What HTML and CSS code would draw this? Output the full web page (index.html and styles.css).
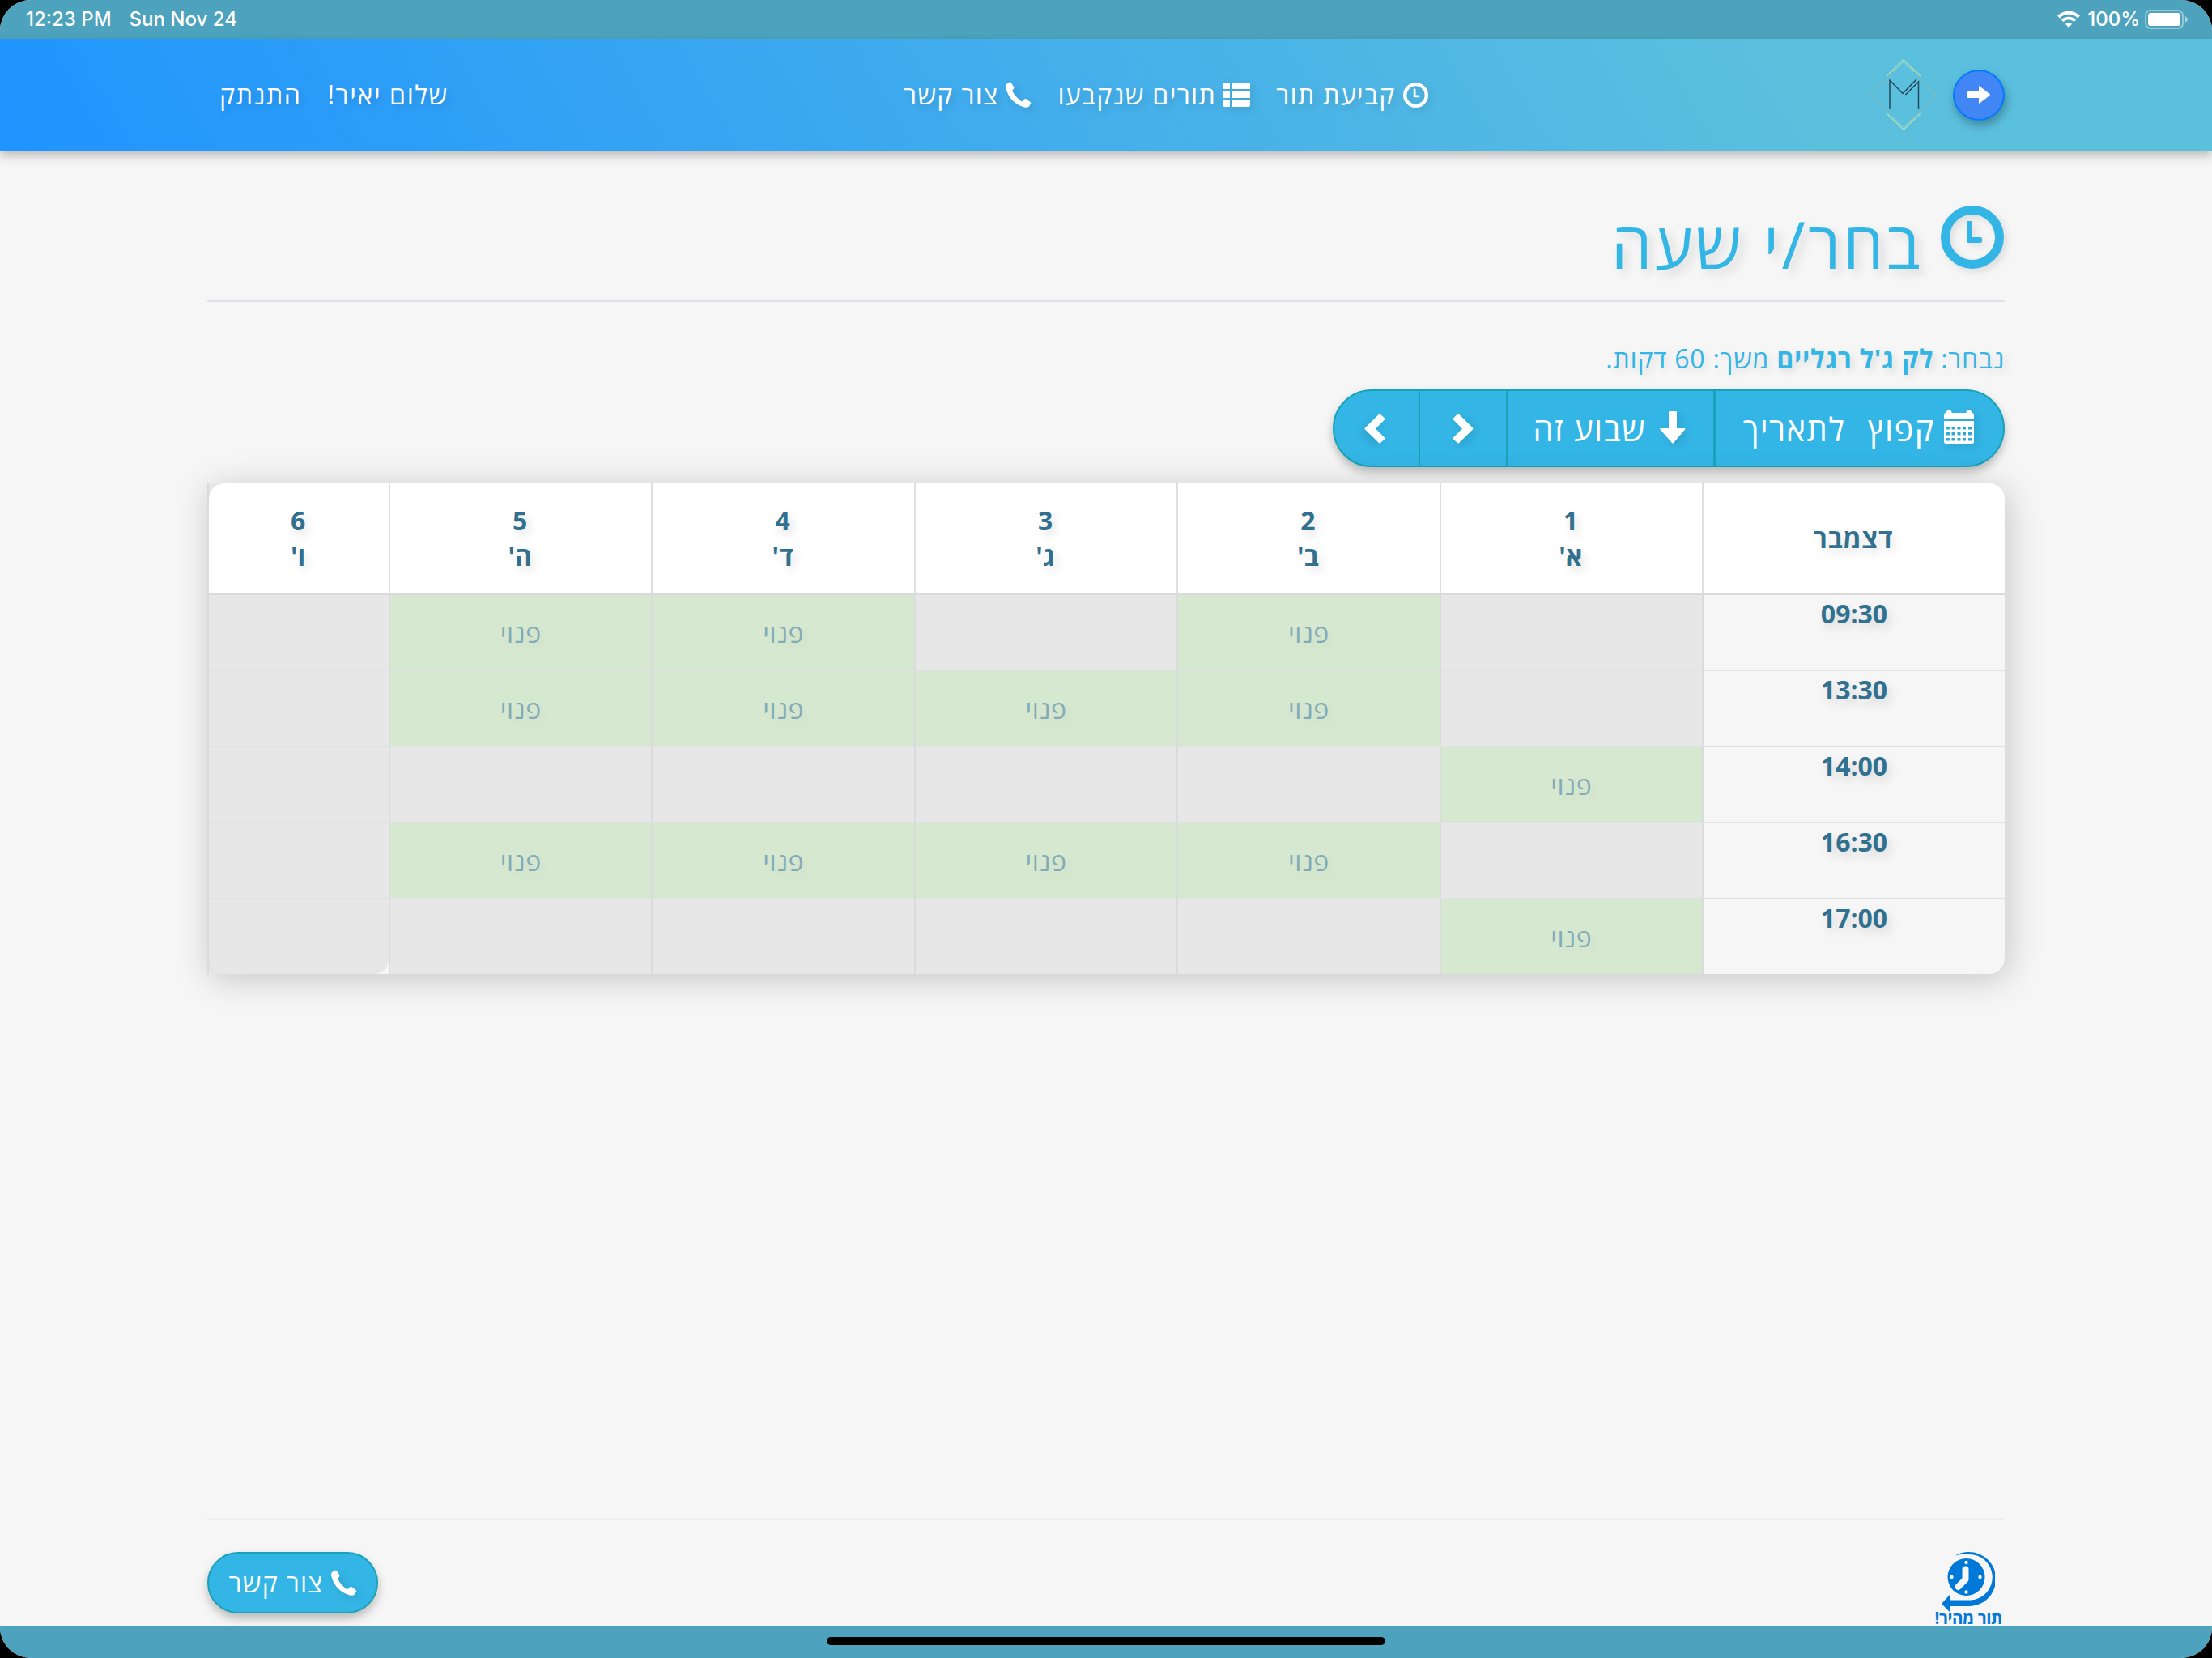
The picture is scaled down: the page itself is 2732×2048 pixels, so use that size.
FILE: index.html
```
<!DOCTYPE html>
<html lang="he" dir="rtl">
<head>
	<meta charset="UTF-8">
	<title>בחר/י שעה</title>
	<link rel="stylesheet" href="styles.css">
</head>
<body>
<svg class="sprite">
	<symbol id="i-clock" viewBox="0 0 78 78">
		<circle cx="39" cy="39" r="33.5" fill="none" stroke="currentColor" stroke-width="11"/>
		<path d="M33 19h4q2 0 2 2v18h10q2 0 2 2v3q0 2-2 2H34q-2 0-2-2V21q0-2 1-2z" fill="currentColor"/>
	</symbol>
	<symbol id="i-list" viewBox="0 0 33 30">
		<path d="M1 0h6q1 0 1 1v7H1q-1 0-1-1V1q0-1 1-1zM11 0h20q2 0 2 2v6H11zM0 11h8v8H0zM11 11h22v8H11zM0 22h8v8H1q-1 0-1-1zM11 22h22v6q0 2-2 2H11z" fill="currentColor"/>
	</symbol>
	<symbol id="i-phone" viewBox="0 0 32 32">
		<path d="M1 3L4.500.8Q6 0 7 1.400L10 6Q11 7.500 9.600 9L8 11Q12 19 20 24.500L23 21.500Q24 20.500 25.500 21.300L30.500 25Q31.800 26 31 27.200L29 30.500Q27 32.300 23 31.500Q5 26 .3 8Q-.4 5 1 3z" fill="currentColor"/>
	</symbol>
	<symbol id="i-calendar" viewBox="0 0 37 41">
		<path fill-rule="evenodd" d="M0 10V5.500Q0 3 2.500 3H3V2q0-2 2-2h2.500q2 0 2 2v1h18V2q0-2 2-2H32q2 0 2 2v1h.5Q37 3 37 5.500V10zM0 13h37v25.500q0 2.500-2.500 2.500h-32Q0 41 0 38.500zM3 20v3.500h4V20zM9.500 20v3.500h4V20zM16.500 20v3.500h4V20zM23 20v3.500h4V20zM30 20v3.500h4V20zM3 27v3.500h4V27zM9.500 27v3.500h4V27zM16.500 27v3.500h4V27zM23 27v3.500h4V27zM30 27v3.500h4V27zM3 34v3.500h4V34zM9.500 34v3.500h4V34zM16.500 34v3.500h4V34zM23 34v3.500h4V34zM30 34v3.500h4V34z" fill="currentColor"/>
	</symbol>
	<symbol id="i-down" viewBox="0 0 32 40">
		<path d="M12 0h8q1 0 1 1v20h9.500q1.500 0 .6 1.500L17 39q-1 1-2 0L.6 22.500Q-.4 21 1 21h10V1q0-1 1-1z" fill="currentColor"/>
	</symbol>
	<symbol id="i-chevron" viewBox="0 0 26 37">
		<path d="M8 .8L25 17.500q1 1 0 2L8 36q-1 1-2 0L1 31.500q-1-1 0-2L12 18.500 1 7.500q-1-1 0-2L6 .8q1-1 2 0z" fill="currentColor"/>
	</symbol>
</svg>

<div class="statusbar" dir="ltr">
	<div class="status-side">
		<span>12:23 PM</span>
		<span>Sun Nov 24</span>
	</div>
	<div class="status-side status-right">
		<svg class="wifi" width="28" height="20" viewBox="0 0 28 20" fill="none" stroke="#fff">
			<path d="M1.500 7a17.500 17.500 0 0 1 25 0" stroke-width="4"/>
			<path d="M6.200 11.800a11 11 0 0 1 15.600 0" stroke-width="3.600"/>
			<path d="M14 20l-4-4.300a5.700 5.700 0 0 1 8 0z" fill="#fff" stroke="none"/>
		</svg>
		<span>100%</span>
		<svg class="battery" width="54" height="24" viewBox="0 0 54 24">
			<rect x="1" y="1" width="46" height="22" rx="6" fill="none" stroke="#fff" stroke-opacity=".4" stroke-width="2"/>
			<rect x="4" y="4" width="40" height="16" rx="3.500" fill="#fff"/>
			<path d="M50 8q3 1.500 3 4t-3 4z" fill="#fff" fill-opacity=".5"/>
		</svg>
	</div>
</div>

<header class="navbar">
	<div class="brand">
		<a class="back">
			<svg width="28" height="22" viewBox="0 0 28 22"><path d="M1 7h13V1q0-1.500 1-.6L27.400 10q.8 1 0 2L15 21.600q-1 .9-1-.6v-6H1q-1 0-1-1V8q0-1 1-1z" fill="#fff"/></svg>
		</a>
		<svg class="logo" width="82" height="88" viewBox="0 0 82 88" fill="none">
			<path d="M41 1L81 44 41 87 1 44z" stroke="#8fb5ad" stroke-width="1"/>
			<path d="M20 21L41 1l21 20M20 67l21 20 21-20" stroke="#a3dfc0" stroke-width="1.500"/>
			<path d="M28 16L41 4l13 12M28 72l13 12 13-12" stroke="#8fd6c9" stroke-width="1"/>
			<path d="M24 62V26l16 16.500L57 25M43.500 44L59.500 28v34" stroke="#24475a" stroke-width="1.500"/>
		</svg>
	</div>
	<nav class="menu">
		<a><svg class="ico-clock"><use href="#i-clock"/></svg>קביעת תור</a>
		<a><svg class="ico-list"><use href="#i-list"/></svg>תורים שנקבעו</a>
		<a><svg class="ico-phone"><use href="#i-phone"/></svg>צור קשר</a>
	</nav>
	<nav class="user">
		<a>שלום יאיר!</a>
		<a>התנתק</a>
	</nav>
</header>

<main class="container">
	<h1><svg class="title-clock"><use href="#i-clock"/></svg>בחר/י שעה</h1>
	<p class="selected">נבחר: <b>לק ג'ל רגליים</b> משך: 60 דקות.</p>

	<div class="toolbar">
		<button class="btn-date"><svg class="ico-cal"><use href="#i-calendar"/></svg>קפוץ &nbsp;לתאריך</button>
		<button class="btn-week"><svg class="ico-down"><use href="#i-down"/></svg>שבוע זה</button>
		<button class="btn-arrow"><svg class="ico-chev"><use href="#i-chevron"/></svg></button>
		<button class="btn-arrow"><svg class="ico-chev flip"><use href="#i-chevron"/></svg></button>
	</div>

	<table class="schedule">
		<colgroup>
			<col class="c-time"><col class="c-day"><col class="c-day"><col class="c-day"><col class="c-day"><col class="c-day"><col class="c-last">
		</colgroup>
		<thead>
			<tr>
				<th class="month">דצמבר</th>
				<th>1<br>א'</th>
				<th>2<br>ב'</th>
				<th>3<br>ג'</th>
				<th>4<br>ד'</th>
				<th>5<br>ה'</th>
				<th>6<br>ו'</th>
			</tr>
		</thead>
		<tbody>
			<tr>
				<td class="time">09:30</td>
				<td></td>
				<td class="free">פנוי</td>
				<td></td>
				<td class="free">פנוי</td>
				<td class="free">פנוי</td>
				<td></td>
			</tr>
			<tr>
				<td class="time">13:30</td>
				<td></td>
				<td class="free">פנוי</td>
				<td class="free">פנוי</td>
				<td class="free">פנוי</td>
				<td class="free">פנוי</td>
				<td></td>
			</tr>
			<tr>
				<td class="time">14:00</td>
				<td class="free">פנוי</td>
				<td></td>
				<td></td>
				<td></td>
				<td></td>
				<td></td>
			</tr>
			<tr>
				<td class="time">16:30</td>
				<td></td>
				<td class="free">פנוי</td>
				<td class="free">פנוי</td>
				<td class="free">פנוי</td>
				<td class="free">פנוי</td>
				<td></td>
			</tr>
			<tr>
				<td class="time">17:00</td>
				<td class="free">פנוי</td>
				<td></td>
				<td></td>
				<td></td>
				<td></td>
				<td></td>
			</tr>
		</tbody>
	</table>
</main>

<footer class="footer">
	<div class="tor">
		<svg width="66" height="74" viewBox="0 0 66 74">
			<path d="M17 4.500A33.500 33.500 0 1 1 35 67H10v7L0 64 10 53v6.500h26A28 28 0 0 0 33 3Q24 2 17 4.500z" fill="#0078d7"/>
			<circle cx="30.500" cy="31" r="23" fill="#0078d7"/>
			<path d="M29.500 21.500v12.500l-9 9" stroke="#f6f6f6" stroke-width="8" stroke-linecap="round" stroke-linejoin="round" fill="none"/>
			<g fill="#f6f6f6"><circle cx="30.500" cy="13" r="2.200"/><circle cx="30.500" cy="49.500" r="2.200"/><circle cx="12.500" cy="31" r="2.200"/><circle cx="47.500" cy="31" r="2.200"/></g>
		</svg>
		<span>תור מהיר!</span>
	</div>
	<a class="contact"><svg class="ico-phone"><use href="#i-phone"/></svg>צור קשר</a>
</footer>

<div class="homebar"><div class="indicator"></div></div>
</body>
</html>
```
FILE: styles.css
```
* {
	box-sizing: border-box;
}
html {
	background: #000;
}
body {
	margin: 0;
	width: 2732px;
	height: 2048px;
	display: flex;
	flex-direction: column;
	overflow: hidden;
	border-radius: 38px;
	background: #f6f6f6;
	font-family: "Open Sans", "Noto Sans", sans-serif;
	font-size: 32px;
	font-weight: 400;
	line-height: 48px;
}
.sprite {
	position: absolute;
	width: 0;
	height: 0;
}

/* status bar */
.statusbar {
	height: 48px;
	flex: none;
	padding: 0 29px 0 32px;
	display: flex;
	justify-content: space-between;
	align-items: center;
	background: #4da3bd;
	color: #fff;
	font: 500 24px/48px Inter, sans-serif;
}
.status-side {
	display: flex;
	gap: 22px;
	align-items: center;
}
.status-right {
	gap: 9px;
}
.battery {
	margin-left: -3px;
}

/* header */
.navbar {
	height: 138px;
	flex: none;
	padding: 0 256px;
	display: flex;
	justify-content: space-between;
	align-items: center;
	background: linear-gradient(60deg, #1f94ff 0%, #5bc0de 80%);
	box-shadow: 0 6px 12px rgba(0,0,0,.25);
	color: #fff;
	letter-spacing: 1.35px;
	text-shadow: 4px 4px 10px rgba(0,0,0,.15);
}
.brand {
	display: flex;
	align-items: center;
	gap: 20px;
}
.back {
	width: 64px;
	height: 63px;
	display: flex;
	align-items: center;
	justify-content: center;
	border: 2px solid #007bff;
	border-radius: 50%;
	background: #4285f4;
	box-shadow: 2px 6px 12px rgba(0,0,0,.3);
}
.menu, .user {
	display: flex;
	gap: 32px;
}
.menu a {
	display: flex;
	align-items: center;
}
.user {
	padding: 0 16px 0 15px;
	letter-spacing: 1.6px;
}
.menu svg, .contact svg, h1 svg, .toolbar svg {
	flex: none;
	filter: drop-shadow(4px 4px 5px rgba(0,0,0,.1));
}
.ico-clock {
	width: 31px;
	height: 31px;
	margin-left: 9px;
}
.ico-list {
	width: 33px;
	height: 30px;
	margin-left: 9px;
}
.ico-phone {
	width: 32px;
	height: 32px;
	margin-left: 9px;
}

/* page */
.container {
	width: 2220px;
	margin: 0 auto;
	flex: 1;
	color: #33b5e5;
}
h1 {
	height: 187px;
	margin: 0;
	padding-top: 53px;
	display: flex;
	border-bottom: 2px solid #dee2e6;
	font-size: 80px;
	font-weight: 400;
	letter-spacing: 3.3px;
	line-height: 124px;
	text-shadow: 6px 6px 12px rgba(0,0,0,.12);
}
.title-clock {
	width: 78px;
	height: 78px;
	margin: 15px 1px 0 22px;
}
.selected {
	margin: 46px 0 14px;
	letter-spacing: .76px;
	text-shadow: 4px 4px 10px rgba(0,0,0,.12);
}
.toolbar {
	width: 830px;
	height: 96px;
	display: flex;
	overflow: hidden;
	border: 2px solid #17a2b8;
	border-radius: 48px;
	background: #33b5e5;
	box-shadow: 0 6px 12px rgba(0,0,0,.25);
}
.toolbar button {
	display: flex;
	align-items: center;
	justify-content: center;
	padding: 0;
	border: 0;
	background: none;
	color: #fff;
	font-family: inherit;
	font-size: 40px;
	letter-spacing: 1.5px;
}
.toolbar .btn-date {
	width: 359px;
	padding-right: 3px;
	border-left: 4px solid #17a2b8;
	word-spacing: 2px;
}
.toolbar .btn-week {
	width: 257px;
	padding-right: 2px;
	border-left: 2px solid #17a2b8;
}
.toolbar .btn-arrow {
	width: 106px;
}
.toolbar .btn-arrow:last-child {
	padding-right: 4px;
	border-right: 2px solid #17a2b8;
}
.ico-cal {
	width: 37px;
	height: 41px;
	margin: 0 0 3px 11px;
}
.ico-down {
	width: 32px;
	height: 40px;
	margin: 0 0 3px 17px;
}
.ico-chev {
	width: 26px;
	height: 37px;
}
.flip {
	transform: scaleX(-1);
}

/* schedule */
.schedule {
	width: 2220px;
	margin-top: 20px;
	table-layout: fixed;
	border-collapse: separate;
	border-spacing: 0;
	border-radius: 0 20px 20px 0;
	background: linear-gradient(to right, #dadbdd 2px, #e6e6e6 2px, #e6e6e6 50px, #f6f6f6 50px);
	box-shadow: 4px 6px 44px rgba(0,0,0,.2);
	color: #31708f;
	text-align: center;
	line-height: 44px;
	text-shadow: 4px 6px 12px rgba(0,0,0,.13);
}
.c-time {
	width: 374px;
}
.c-day {
	width: 324.4px;
}
.c-last {
	width: 224px;
}
.schedule th {
	height: 138px;
	padding: 1px 2px 0 0;
	border-left: 2px solid #dddee0;
	border-bottom: 3px solid #d9dadc;
	background: #fff;
	font-weight: 700;
}
.schedule .month {
	letter-spacing: .7px;
}
.schedule td {
	height: 94px;
	padding: 2px 0 0;
	border-left: 2px solid #dadbdd;
	border-bottom: 2px solid #dee0e4;
	background: #e7e7e7;
}
.schedule tr:last-child td {
	height: 92px;
	border-bottom: 0;
}
.schedule .time {
	padding-top: 1px;
	vertical-align: top;
	background: #f6f6f6;
	font-weight: 700;
}
.schedule .free {
	background: #d6e8d0;
	color: rgba(49,112,163,.52);
	letter-spacing: .6px;
	text-shadow: 4px 6px 12px rgba(0,0,0,.06);
}
.schedule th:first-child {
	border-top-right-radius: 20px;
}
.schedule th:last-child {
	border-left-color: transparent;
	border-top-left-radius: 20px;
	background-clip: padding-box;
}
.schedule tr:last-child .time {
	border-bottom-right-radius: 20px;
}
.schedule tbody tr:last-child td:last-child {
	border-radius: 0 0 18px 18px;
}

/* footer */
.footer {
	width: 2220px;
	height: 133px;
	flex: none;
	margin: 0 auto;
	display: flex;
	justify-content: space-between;
	align-items: flex-start;
	border-top: 2px solid #eee;
}
.tor {
	height: 131px;
	padding: 40px 3px 0 0;
	display: flex;
	flex-direction: column;
	align-items: center;
	color: #0078d7;
	font-size: 20.5px;
	font-weight: 700;
	letter-spacing: -.4px;
	line-height: 15px;
}
.contact {
	width: 211px;
	height: 76px;
	margin-top: 40px;
	display: flex;
	align-items: center;
	justify-content: center;
	border: 2px solid #17a2b8;
	border-radius: 38px;
	background: #33b5e5;
	box-shadow: 0 6px 12px rgba(0,0,0,.25);
	color: #fff;
	letter-spacing: 1.3px;
}
.homebar {
	height: 40px;
	flex: none;
	display: flex;
	justify-content: center;
	padding-top: 14px;
	background: #4da3bd;
}
.indicator {
	width: 690px;
	height: 10px;
	border-radius: 5px;
	background: #000;
}
```
